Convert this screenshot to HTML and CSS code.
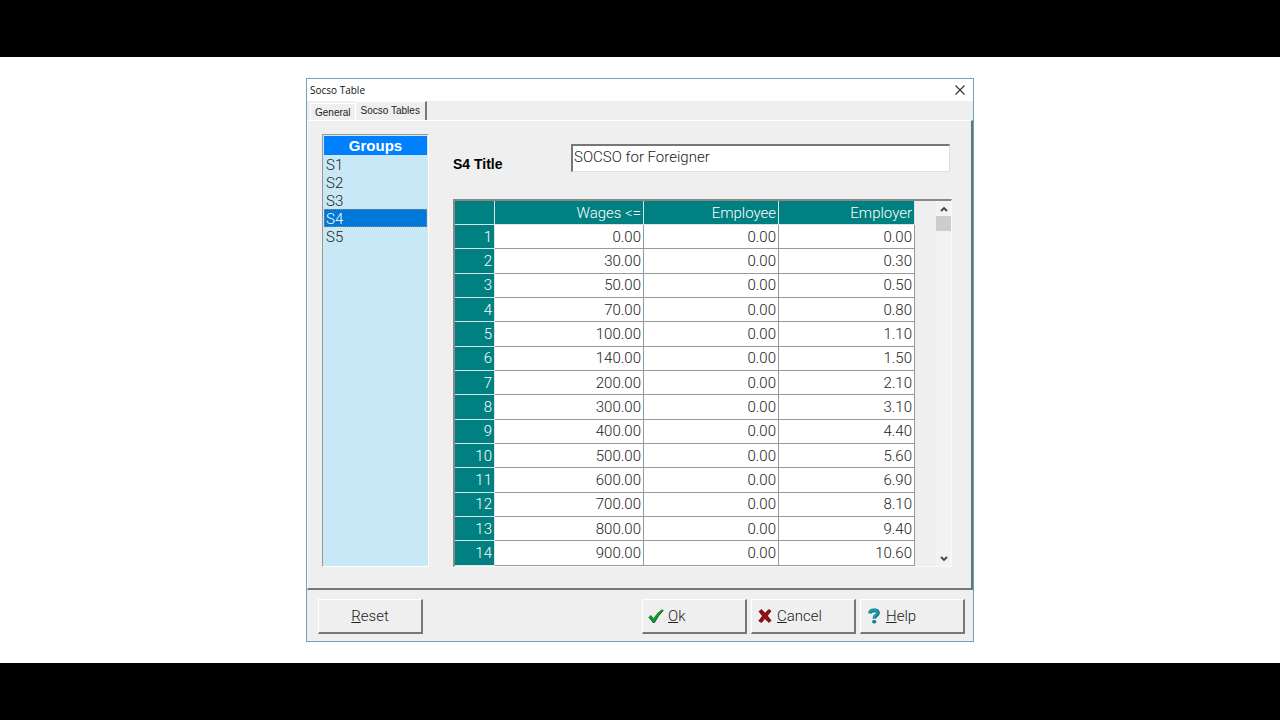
FILE: index.html
```html
<!DOCTYPE html>
<html lang="en">
<head>
    <meta charset="UTF-8">
    <meta name="viewport" content="width=device-width, initial-scale=1.0">
    <title>Socso Table</title>
    <link rel="stylesheet" href="styles.css">
</head>
<body>
    <main class="stage">
        <section class="dialog">
            <header class="title-bar">
                <h1>Socso Table</h1>
                <button class="close-btn" aria-label="Close">
                    <svg width="10" height="10" viewBox="0 0 10 10"><path d="M0.5 0.5L9.5 9.5M9.5 0.5L0.5 9.5" stroke="#333" stroke-width="1.1" fill="none"/></svg>
                </button>
            </header>

            <nav class="tabs">
                <button class="tab">General</button>
                <button class="tab active">Socso Tables</button>
            </nav>

            <div class="panel">
                <div class="groups">
                    <h2>Groups</h2>
                    <ul>
                        <li><button>S1</button></li>
                        <li><button>S2</button></li>
                        <li><button>S3</button></li>
                        <li><button class="selected">S4</button></li>
                        <li><button>S5</button></li>
                    </ul>
                </div>

                <div class="details">
                    <div class="field">
                        <label for="groupTitle">S4 Title</label>
                        <input type="text" id="groupTitle" value="SOCSO for Foreigner">
                    </div>

                    <div class="grid">
                        <table>
                            <colgroup>
                                <col class="col-no">
                                <col class="col-wages">
                                <col class="col-employee">
                                <col class="col-employer">
                            </colgroup>
                            <thead>
                                <tr><th></th><th>Wages &lt;=</th><th>Employee</th><th>Employer</th></tr>
                            </thead>
                            <tbody>
                                <tr><th>1</th><td>0.00</td><td>0.00</td><td>0.00</td></tr>
                                <tr><th>2</th><td>30.00</td><td>0.00</td><td>0.30</td></tr>
                                <tr><th>3</th><td>50.00</td><td>0.00</td><td>0.50</td></tr>
                                <tr><th>4</th><td>70.00</td><td>0.00</td><td>0.80</td></tr>
                                <tr><th>5</th><td>100.00</td><td>0.00</td><td>1.10</td></tr>
                                <tr><th>6</th><td>140.00</td><td>0.00</td><td>1.50</td></tr>
                                <tr><th>7</th><td>200.00</td><td>0.00</td><td>2.10</td></tr>
                                <tr><th>8</th><td>300.00</td><td>0.00</td><td>3.10</td></tr>
                                <tr><th>9</th><td>400.00</td><td>0.00</td><td>4.40</td></tr>
                                <tr><th>10</th><td>500.00</td><td>0.00</td><td>5.60</td></tr>
                                <tr><th>11</th><td>600.00</td><td>0.00</td><td>6.90</td></tr>
                                <tr><th>12</th><td>700.00</td><td>0.00</td><td>8.10</td></tr>
                                <tr><th>13</th><td>800.00</td><td>0.00</td><td>9.40</td></tr>
                                <tr><th>14</th><td>900.00</td><td>0.00</td><td>10.60</td></tr>
                            </tbody>
                        </table>
                        <div class="scrollbar">
                            <button aria-label="Scroll up">
                                <svg width="8" height="6" viewBox="0 0 8 6"><path d="M1 5L4 2L7 5" stroke="#444" stroke-width="1.8" fill="none"/></svg>
                            </button>
                            <div class="thumb"></div>
                            <button aria-label="Scroll down">
                                <svg width="8" height="6" viewBox="0 0 8 6"><path d="M1 1L4 4L7 1" stroke="#444" stroke-width="1.8" fill="none"/></svg>
                            </button>
                        </div>
                    </div>
                </div>
            </div>

            <footer class="actions">
                <button class="btn btn-reset"><span><u>R</u>eset</span></button>
                <button class="btn">
                    <svg width="16" height="16" viewBox="0 0 16 16"><path d="M0.5 9L3 7L5.5 10Q9.5 4 14 1.2L15.5 2.2Q10 7.5 6.5 14.5H4.8Q3 11.5 0.5 9Z" fill="#159a35"/><path d="M1 9.5Q3.5 11.5 5 14.5H6.5Q10 7.5 15.3 2.3" stroke="#0b5a1c" fill="none"/></svg>
                    <span><u>O</u>k</span>
                </button>
                <button class="btn">
                    <svg width="16" height="16" viewBox="0 0 16 16"><path d="M2 3.5L4.5 1.5L8 5.3L11.8 1.5L14 3L10.3 7.8L14 12.5L12 14.5L7.8 10.5L4.5 14.5L1.8 13L5.5 8Z" fill="#960c10" stroke="#5f0808" stroke-width="0.8" stroke-linejoin="round"/></svg>
                    <span><u>C</u>ancel</span>
                </button>
                <button class="btn">
                    <svg width="16" height="16" viewBox="0 0 16 16"><path d="M4 5.4Q4.2 2.4 8.2 2.4Q12 2.4 12 5Q12 6.6 10 7.6Q8.4 8.5 8.4 10.6" stroke="#075d6b" stroke-width="3.6" fill="none"/><path d="M3.6 5Q4 2.2 8 2.2Q11.6 2.2 11.6 4.8Q11.6 6.3 9.6 7.3Q8 8.3 8 10.4" stroke="#12a0b4" stroke-width="2.2" fill="none"/><ellipse cx="8.2" cy="13.7" rx="2.2" ry="1.8" fill="#0b7f90"/></svg>
                    <span><u>H</u>elp</span>
                </button>
            </footer>
        </section>
    </main>
</body>
</html>
```

FILE: styles.css
```css
* {
    margin: 0;
    padding: 0;
    box-sizing: border-box;
}

body {
    min-height: 100vh;
    padding: 57px 0;
    display: flex;
    background-color: #000;
    color: #222;
    font-family: Roboto, "Liberation Sans", sans-serif;
    font-size: 15px;
    font-weight: 300;
}

button,
input {
    font: inherit;
    color: inherit;
    border: none;
    border-radius: 0;
    background: none;
}

.stage {
    flex: 1;
    display: flex;
    justify-content: center;
    align-items: center;
    background-color: #fff;
}

/* Window */
.dialog {
    width: 100%;
    max-width: 668px;
    border: 1px solid #6aa5bd;
    background-color: #efefef;
}

.title-bar {
    display: flex;
    justify-content: space-between;
    align-items: center;
    height: 22px;
    padding: 0 8px 1px 3px;
    background-color: #fff;
}

.title-bar h1 {
    font-family: "Open Sans", sans-serif;
    font-size: 10px;
    font-weight: 400;
    color: #111;
}

.close-btn {
    display: flex;
}

/* Tabs */
.tabs {
    display: flex;
    align-items: flex-end;
    height: 19px;
    padding-left: 3px;
    font-family: "Liberation Sans", sans-serif;
    font-size: 10px;
    font-weight: 400;
}

.tab {
    height: 17px;
    padding: 0 4px;
    border-top: 1px solid #fff;
    border-left: 1px solid #fff;
}

.tab.active {
    height: 19px;
    padding: 0 5px 2px;
    border-right: 2px solid #777;
}

/* Panel */
.panel {
    display: flex;
    gap: 24px;
    padding: 13px 19px 21px 14px;
    border-top: 1px solid #fff;
    border-left: 1px solid #fff;
    border-right: 2px solid #5f7680;
    border-bottom: 2px solid #777;
}

.groups {
    width: 107px;
    padding: 1px;
    border: 1px solid #fff;
    border-top-color: #999;
    border-left-color: #999;
    background-color: #c9e8f5;
}

.groups h2 {
    font-family: "Liberation Sans", Arial, sans-serif;
    font-size: 15px;
    font-weight: bold;
    line-height: 19px;
    text-align: center;
    color: #fff;
    background-color: #0080ff;
}

.groups ul {
    list-style: none;
}

.groups button {
    display: block;
    width: 100%;
    height: 18px;
    padding: 1px 0 0 2px;
    line-height: 18px;
    text-align: left;
}

.groups .selected {
    color: #fff;
    background-color: #0078d7;
    outline: 1px dotted #8a8a80;
    outline-offset: -1px;
}

.details {
    flex: 1;
    padding-top: 10px;
}

.field {
    display: flex;
    align-items: center;
    margin-bottom: 27px;
}

.field label {
    width: 118px;
    padding-top: 11px;
    font-family: "Liberation Sans", Arial, sans-serif;
    font-size: 14px;
    font-weight: bold;
    color: #000;
}

.field input {
    flex: 1;
    height: 28px;
    margin-right: 2px;
    padding: 0 1px 4px;
    border: 1px solid #e0e0e0;
    border-top: 2px solid #777;
    border-left: 2px solid #777;
    background-color: #fff;
}

/* Grid */
.grid {
    display: flex;
    justify-content: space-between;
    height: 368px;
    border: 1px solid #fafafa;
    border-top: 2px solid #888;
    border-left: 2px solid #888;
}

.grid table {
    width: 460px;
    height: 365px;
    table-layout: fixed;
    border-collapse: separate;
    border-spacing: 0;
}

.col-no {
    width: 40px;
}

.col-wages {
    width: 149px;
}

.col-employee {
    width: 135px;
}

.grid th,
.grid td {
    padding-right: 2px;
    border-right: 1px solid #999;
    border-bottom: 1px solid #999;
    text-align: right;
    font-weight: 300;
    line-height: 20px;
}

.grid th {
    color: #fff;
    background-color: #008080;
    border-color: #d5e6e6;
}

.grid thead th {
    height: 24px;
}

.grid td {
    background-color: #fff;
}

.scrollbar {
    display: flex;
    flex-direction: column;
    width: 15px;
    background-color: #f2f2f2;
}

.scrollbar button {
    display: flex;
    justify-content: center;
    align-items: center;
    height: 15px;
}

.scrollbar .thumb {
    height: 15px;
    margin-bottom: auto;
    background-color: #cdcdcd;
}

/* Buttons */
.actions {
    display: flex;
    gap: 4px;
    padding: 9px 8px 7px 11px;
}

.btn {
    display: flex;
    align-items: center;
    gap: 4px;
    width: 105px;
    height: 35px;
    padding-left: 5px;
    border: 1px solid #fff;
    border-right: 2px solid #777;
    border-bottom: 2px solid #777;
}

.btn-reset {
    justify-content: center;
    margin-right: auto;
    padding-left: 0;
}
```
